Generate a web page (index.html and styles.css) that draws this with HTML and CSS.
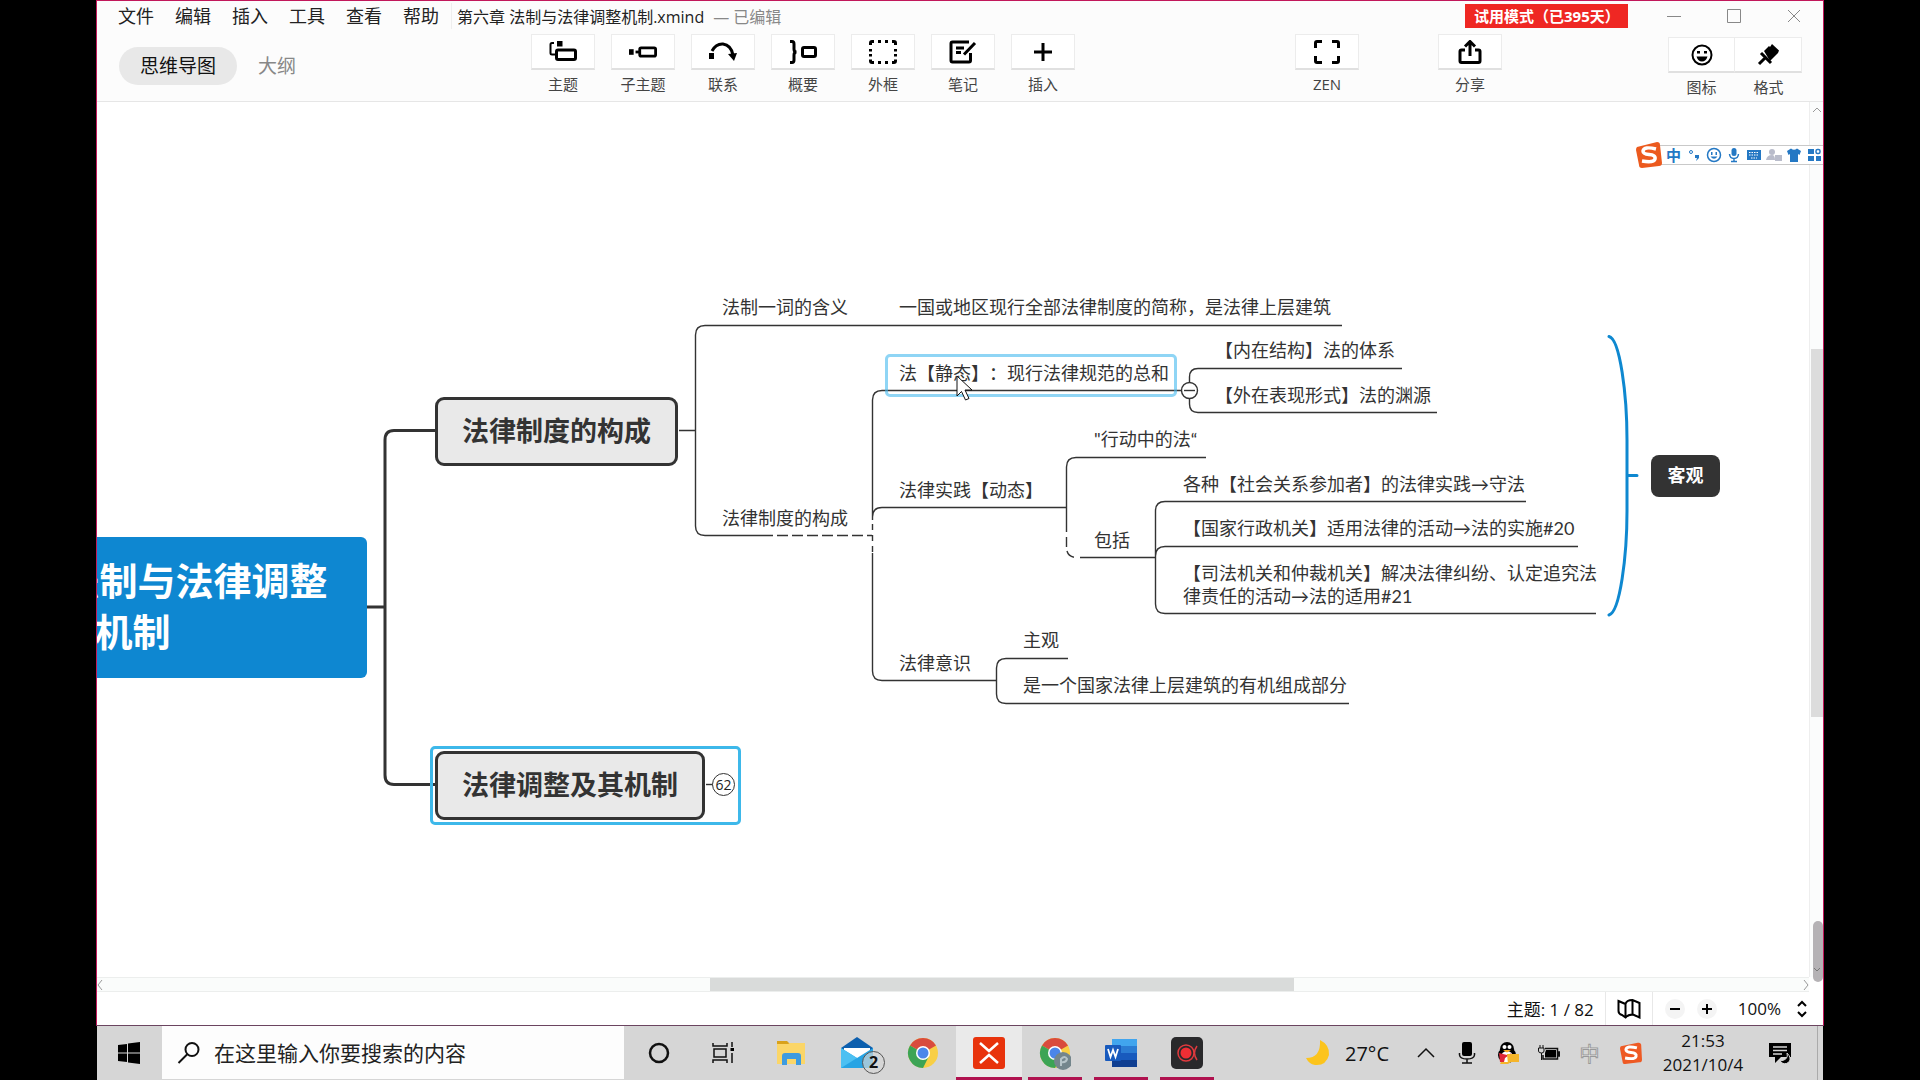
FILE: index.html
```html
<!DOCTYPE html>
<html lang="zh-CN">
<head>
<meta charset="utf-8">
<title>第六章 法制与法律调整机制.xmind</title>
<link rel="stylesheet" href="styles.css">
</head>
<body>
<div class="desktop">
  <div class="window">
    <header class="header">
      <div class="titlebar">
        <nav class="menu">
          <button>文件</button><button>编辑</button><button>插入</button><button>工具</button><button>查看</button><button>帮助</button>
        </nav>
        <div class="doc-title">第六章 法制与法律调整机制.xmind</div>
        <div class="doc-state">— 已编辑</div>
        <div class="trial">试用模式（已395天）</div>
        <div class="controls">
          <button aria-label="最小化"><svg width="14" height="14"><path d="M0 7.5H14"/></svg></button>
          <button aria-label="最大化"><svg width="14" height="14"><path d="M.5.5H13.5V13.500H.5Z"/></svg></button>
          <button aria-label="关闭"><svg width="14" height="14"><path d="M1 1L13 13M13 1L1 13"/></svg></button>
        </div>
      </div>
      <div class="toolbar">
        <div class="tabs">
          <button class="tab tab-on">思维导图</button>
          <button class="tab">大纲</button>
        </div>
        <div class="tools">
          <button class="tool"><span class="face"><svg class="ico" viewBox="0 0 28 24"><path d="M5 3H3Q1.500 3 1.500 4.500V13Q1.500 14.500 3 14.500H6" stroke-width="2"/><path d="M8 1H13.500V6.500H8Z" class="solid"/><rect x="7.500" y="10" width="19" height="9.500" rx="1.500"/></svg></span><span>主题</span></button>
          <button class="tool"><span class="face"><svg class="ico" viewBox="0 0 30 24"><path d="M0 9H5V15H0Z" class="solid"/><path d="M7 12H11"/><rect x="11.500" y="7.500" width="17" height="9" rx="1.500"/></svg></span><span>子主题</span></button>
          <button class="tool"><span class="face"><svg class="ico" viewBox="0 0 28 24"><path d="M0 13H5V19H0Z" class="solid"/><path d="M3 11Q7 3.500 14 4Q22 5 24 15"/><path d="M19 14L28 13L25 21Z" class="solid"/></svg></span><span>联系</span></button>
          <button class="tool"><span class="face"><svg class="ico" viewBox="0 0 28 24"><path d="M1 1.500H3Q5 1.500 5 4V9Q5 12 7.500 12Q5 12 5 15V20Q5 22.500 3 22.500H1"/><rect x="13.500" y="7.500" width="13" height="9" rx="1.500"/></svg></span><span>概要</span></button>
          <button class="tool"><span class="face"><svg class="ico" viewBox="0 0 28 24"><path d="M5 1.500H3Q1.500 1.500 1.500 3V5M9 1.500H12M16 1.500H19M23 1.500H25Q26.500 1.500 26.500 3V5M26.500 9V11.500M26.500 14V16.500M26.500 19.500V21Q26.500 22.500 25 22.500H23M19 22.500H16M12 22.500H9M5 22.500H3Q1.500 22.500 1.500 21V19.500M1.500 16.500V14M1.500 11.500V9"/></svg></span><span>外框</span></button>
          <button class="tool"><span class="face"><svg class="ico" viewBox="0 0 28 24"><path d="M20 2H3.500Q2 2 2 3.500V20.500Q2 22 3.500 22H20Q21.500 22 21.500 20.500V13M7 8H15M7 12.500H12M26 3L15 14.500"/></svg></span><span>笔记</span></button>
          <button class="tool"><span class="face"><svg class="ico" viewBox="0 0 28 24"><path d="M14 3V21M5 12H23"/></svg></span><span>插入</span></button>
        </div>
        <button class="tool tool-zen"><span class="face"><svg class="ico" viewBox="0 0 28 24"><path d="M9 1.500H4Q2.500 1.500 2.500 3V8M19 1.500H24Q25.500 1.500 25.500 3V8M25.500 16V21Q25.500 22.500 24 22.500H19M9 22.500H4Q2.500 22.500 2.500 21V16"/></svg></span><span>ZEN</span></button>
        <button class="tool tool-share"><span class="face"><svg class="ico" viewBox="0 0 28 24"><path d="M9 10H5.500Q4 10 4 11.500V21Q4 22.500 5.500 22.500H22.500Q24 22.500 24 21V11.500Q24 10 22.500 10H19M14 16V2M9 6.500L14 1.500L19 6.500"/></svg></span><span>分享</span></button>
        <div class="pair">
          <button class="tool"><span class="face"><svg class="ico" viewBox="0 0 28 24"><circle cx="14" cy="12" r="9.500"/><path d="M9 8H12V10.500H9ZM16 8H19V10.500H16ZM8.500 13.500H19.500Q18 18.500 14 18.500Q10 18.500 8.500 13.500Z" class="solid"/></svg></span><span>图标</span></button>
          <button class="tool"><span class="face"><svg class="ico" viewBox="0 0 28 24"><path d="M10 8L15 3L16 4L18 1L25 7.500L24 10L16 18Z" class="solid"/><path d="M7 10L17 20M12 14L5 21" stroke-width="3"/></svg></span><span>格式</span></button>
        </div>
      </div>
    </header>

    <main class="workspace">
      <div class="canvas">
        <svg class="links" viewBox="97 102 1712 875" width="1712" height="875">
          <g class="thick">
            <path d="M367 607H385M435 430.500H394Q385 430.500 385 440V775Q385 784.500 394 784.500H435"/>
          </g>
          <g class="thin">
            <path d="M679 430.500H695.500M1342 325.500H705Q695.500 325.500 695.500 335V526Q695.500 535.500 705 535.500H762"/>
            <path d="M762 535.500H872" stroke-dasharray="11 4"/>
            <path d="M1189 390.500H882Q872.500 390.500 872.500 400V520M1067 507.500H882Q872.500 507.500 872.500 517M872.500 553V671Q872.500 680.500 882 680.500H997"/>
            <path d="M872.500 524V553" stroke-dasharray="6 5"/>
            <path d="M1402 368.500H1198Q1189.500 368.500 1189.500 377V404Q1189.500 412.500 1198 412.500H1437"/>
            <path d="M1206 457.500H1076Q1066.500 457.500 1066.500 467V532M1080 557.500H1156"/>
            <path d="M1066.500 537V548Q1067 557 1076 557.500" stroke-dasharray="10 4"/>
            <path d="M1526 501.500H1165Q1155.500 501.500 1155.500 511V604Q1155.500 613.500 1165 613.500H1596M1155.500 556Q1155.500 546.500 1165 546.500H1578"/>
            <path d="M1068 658.500H1006Q996.500 658.500 996.500 668V694Q996.500 703.500 1006 703.500H1349"/>
            <circle cx="1189.500" cy="390.500" r="8"/><path d="M1184 390.500H1195"/>
            <path d="M706 784.500H713"/>
          </g>
          <path class="brace" d="M1609 336.500C1620 339 1627 395 1627 440V511C1627 556 1620 612 1609 615M1627 475.500H1637"/>
        </svg>

        <div class="central">第六章 法制与法律调整<br>机制</div>
        <div class="main main-a">法律制度的构成</div>
        <div class="main main-b">法律调整及其机制</div>
        <div class="picked"></div>
        <div class="count">62</div>

        <div class="leaf leaf-term">法制一词的含义</div>
        <div class="leaf leaf-def">一国或地区现行全部法律制度的简称，是法律上层建筑</div>
        <div class="leaf leaf-parts">法律制度的构成</div>
        <div class="leaf leaf-static">法【静态】：现行法律规范的总和</div>
        <div class="leaf leaf-inner">【内在结构】法的体系</div>
        <div class="leaf leaf-outer">【外在表现形式】法的渊源</div>
        <div class="leaf leaf-dynamic">法律实践【动态】</div>
        <div class="leaf leaf-action">"行动中的法“</div>
        <div class="leaf leaf-include">包括</div>
        <div class="leaf leaf-social">各种【社会关系参加者】的法律实践→守法</div>
        <div class="leaf leaf-admin">【国家行政机关】适用法律的活动→法的实施#20</div>
        <div class="leaf leaf-court">【司法机关和仲裁机关】解决法律纠纷、认定追究法<br>律责任的活动→法的适用#21</div>
        <div class="leaf leaf-mind">法律意识</div>
        <div class="leaf leaf-subj">主观</div>
        <div class="leaf leaf-organic">是一个国家法律上层建筑的有机组成部分</div>
        <div class="hovered"></div>
        <div class="summary">客观</div>
        <svg class="cursor" viewBox="0 0 18 26"><path d="M1 1V21L5.500 16.500L9.500 25L13 23.500L9 15H16Z"/></svg>
      </div>
      <div class="vscroll"><svg width="10" height="6"><path d="M1 5L5 1L9 5"/></svg><i class="vthumb"></i></div>
      <div class="hscroll"><svg width="6" height="12"><path d="M5 1L1 6L5 11"/></svg><i class="hthumb"></i><svg width="6" height="12"><path d="M1 1L5 6L1 11"/></svg></div>
      <div class="corner"><svg width="8" height="6"><path d="M1 1L4 4L7 1"/></svg></div>

      <div class="ime">
        <svg class="sogou" viewBox="0 0 26 26"><path d="M1 5L21 0Q24 0 24 3L26 21Q26 24 23 24L6 26Q3 26 3 23L0 8Q0 6 1 5Z" fill="#ec5a1e"/><path d="M20 7Q8 4 7 9Q7 12 13 12.500Q20 13 19 17Q18 21 6 19" fill="none" stroke="#fff" stroke-width="3.500"/></svg>
        <b>中</b>
        <svg viewBox="0 0 16 16"><circle cx="5" cy="5" r="1.500" fill="none" stroke="#2478c4"/><path d="M9 8H13V11L10 14L11 11H9Z"/></svg>
        <svg viewBox="0 0 16 16"><circle cx="8" cy="8" r="6.500" fill="none" stroke="#2478c4" stroke-width="1.500"/><path d="M5 5H6.500V8H5ZM9.500 5H11V8H9.500ZM4.500 9.500H11.500Q8 14 4.500 9.500Z"/></svg>
        <svg viewBox="0 0 16 16"><rect x="5.500" y="1" width="5" height="8" rx="2.500"/><path d="M3.500 7Q4 11.500 8 11.500T12.500 7M8 11V15M5 14.500H11" fill="none" stroke="#2478c4" stroke-width="1.500"/></svg>
        <svg viewBox="0 0 16 16"><path d="M1 3H15V13H1Z"/><path d="M3 5.500H13M3 8H13M5 11H11" stroke="#fff" stroke-dasharray="1.500 1" fill="none"/></svg>
        <svg class="dim" viewBox="0 0 16 16"><circle cx="6" cy="5" r="3"/><path d="M0 13Q1 8 6 8Q9 8 9 13ZM9 8H16V14H9Z"/></svg>
        <svg viewBox="0 0 16 16"><path d="M1 4L5 1.500Q8 4 11 1.500L15 4L13.500 8L12 7V15H4V7L2.500 8Z"/></svg>
        <svg viewBox="0 0 16 16"><path d="M2 2H8V7H2ZM2 9H8V14H2ZM10 9H15V14H10Z"/><rect x="10" y="2.500" width="4" height="4" rx="1.500" fill="none" stroke="#2478c4" stroke-width="1.500"/></svg>
      </div>
    </main>

    <footer class="status">
      <span class="topics">主题: 1 / 82</span>
      <button class="mapbtn" aria-label="导航图"><svg width="24" height="20" viewBox="0 0 24 20"><path d="M1.500 2L8.500 5Q9.500 1 15.500 1L22.500 4V18.500L16 15.500Q11 15.500 8.500 18.500L5 16Q1.500 15 1.500 12ZM8.500 5V18.500M15.500 1V15.500"/></svg></button>
      <button class="round" aria-label="缩小"><svg width="12" height="12"><path d="M1 6H11"/></svg></button>
      <button class="round" aria-label="放大"><svg width="12" height="12"><path d="M1 6H11M6 1V11"/></svg></button>
      <span class="zoom">100%</span>
      <button class="step" aria-label="缩放比例"><svg width="12" height="18"><path d="M2 6L6 2L10 6M2 12L6 16L10 12"/></svg></button>
    </footer>
  </div>

  <div class="taskbar">
    <button class="start" aria-label="开始"><svg width="22" height="22" viewBox="0 0 22 22"><path d="M0 3L9 2V10.500H0ZM10 1.500L22 0V10.500H10ZM0 11.500H9V20L0 19ZM10 11.500H22V22L10 20.500Z"/></svg></button>
    <label class="search"><svg width="24" height="24" viewBox="0 0 24 24"><circle cx="15" cy="8.500" r="6.500"/><path d="M10.500 13L1.500 22"/></svg><input type="text" placeholder="在这里输入你要搜索的内容" aria-label="搜索"></label>
    <div class="apps">
      <button aria-label="Cortana"><svg viewBox="0 0 32 34"><circle cx="16" cy="17" r="9" fill="none" stroke="#111" stroke-width="2.500"/></svg></button>
      <button aria-label="任务视图"><svg viewBox="0 0 32 34"><path d="M4 7V10H18V7M4 27V24H18V27M5 13H17V21H5ZM23 6V11M23 17V27" fill="none" stroke="#111" stroke-width="1.500"/><path d="M21.500 12H25V15H21.500Z"/></svg></button>
      <button aria-label="文件资源管理器"><svg viewBox="0 0 32 34"><path d="M2 5H12L15 8V12H2Z" fill="#d9a21b"/><path d="M2 8H13L15 7H30V28H2Z" fill="#fbd668"/><path d="M7 29V20Q7 17 10 17H23Q26 17 26 20V29H21V23H12V29Z" fill="#3e9be0"/></svg></button>
      <button aria-label="邮件"><svg viewBox="0 0 32 34"><path d="M0 12L16 1L32 12V32H0Z" fill="#0c5fae"/><path d="M3 12H29V22H3Z" fill="#fff"/><path d="M0 12L16 22L32 12V32H0Z" fill="#27a4e4"/><path d="M0 32L16 22L0 12Z" fill="#4cc0f2"/></svg><span class="badge">2</span></button>
      <button aria-label="Chrome"><svg viewBox="0 0 32 34"><g id="chrome"><circle cx="16" cy="17" r="15" fill="#f8cf45"/><path d="M16 17L3 9.500A15 15 0 0 1 29 9.500Z" fill="#d94b3d"/><path d="M16 17L3 9.500A15 15 0 0 0 16 32L22 20Z" fill="#3ca455"/><circle cx="16" cy="17" r="7" fill="#fff"/><circle cx="16" cy="17" r="5.500" fill="#4b86ea"/></g></svg></button>
      <button class="on active" aria-label="XMind"><svg viewBox="0 0 32 34"><rect y="1" width="32" height="32" rx="3" fill="#e8330c"/><path d="M7 7L16 15L25 7M7 27L16 19L25 27" fill="none" stroke="#fff" stroke-width="2.500"/></svg></button>
      <button class="on" aria-label="Chrome 用户"><svg viewBox="0 0 32 34"><use href="#chrome"/><circle cx="24" cy="25" r="9" fill="#74868c"/><path d="M22 30V23Q26 19 28 23Q27 27 22 26" fill="none" stroke="#b6c4c8" stroke-width="2"/></svg></button>
      <button class="on" aria-label="Word"><svg viewBox="0 0 32 34"><path d="M7 3H32V10H7Z" fill="#41a5ee"/><path d="M7 10H32V17H7Z" fill="#2b7cd3"/><path d="M7 17H32V24H7Z" fill="#185abd"/><path d="M7 24H32V31H7Z" fill="#103f91"/><rect y="9" width="16" height="16" rx="1" fill="#185abd"/><path d="M3 13L5.500 21L8 14L10.500 21L13 13" fill="none" stroke="#fff" stroke-width="1.800"/></svg></button>
      <button class="on" aria-label="录屏"><svg viewBox="0 0 32 34"><rect y="1" width="32" height="32" rx="5" fill="#29292b"/><circle cx="15" cy="17" r="5.500" fill="#f02e34"/><circle cx="15" cy="17" r="8" fill="none" stroke="#e03a3e" stroke-width="1.500"/><path d="M26 10Q21 17 26 24" fill="none" stroke="#e03a3e" stroke-width="1.500"/></svg></button>
    </div>
    <div class="tray">
      <button class="weather"><svg width="26" height="26" viewBox="0 0 26 26"><path d="M15 0Q25 5 24 15Q21 26 10 25Q4 24 1 18Q16 18 15 0Z" fill="#fcc41c"/></svg><span>27°C</span></button>
      <button aria-label="显示隐藏的图标"><svg viewBox="0 0 22 22"><path d="M3 15L11 7L19 15" fill="none" stroke="#111" stroke-width="1.500"/></svg></button>
      <button aria-label="麦克风"><svg viewBox="0 0 22 22"><rect x="6" y="0" width="10" height="14" rx="2"/><path d="M3.500 11V13Q4 17 11 17T18.500 13V11M11 17V21M6 21H16" fill="none" stroke="#111" stroke-width="1.500"/></svg></button>
      <button aria-label="QQ"><svg viewBox="0 0 22 22"><ellipse cx="10" cy="13" rx="9" ry="8"/><ellipse cx="10" cy="7" rx="7" ry="7"/><ellipse cx="10" cy="15" rx="6" ry="6" fill="#fff"/><circle cx="7.500" cy="5" r="2" fill="#fff"/><circle cx="12.500" cy="5" r="2" fill="#fff"/><path d="M6 8H14L10 10.500Z" fill="#f5a81c"/><path d="M2 11L10 13L15 11L8 16L7 20H3Z" fill="#df2638"/><path d="M10 12H22V20H14L11 22Z" fill="#f5b52b"/><path d="M4 20H11V22H3Z" fill="#f5b52b"/></svg></button>
      <button aria-label="电源"><svg viewBox="0 0 22 22"><path d="M7 6.500H19.500V17H5V13M20 10H21.500V14H20Z" fill="none" stroke="#111" stroke-width="1.500"/><path d="M8 8H18V15.500H7V11Z"/><path d="M.5 6H6V9Q6 11 3.500 11Q.5 11 .5 9ZM2 6V3M5 6V3M3.500 11V18" fill="none" stroke="#111"/></svg></button>
      <button class="lang">中</button>
      <button aria-label="搜狗输入法"><svg viewBox="0 0 26 26"><path d="M1 5L21 1Q24 0 25 3L26 21Q26 24 23 24L6 26Q3 26 3 23L0 8Q0 6 1 5Z" fill="#ee5a24"/><path d="M20 7Q8 4 7 9Q7 12 13 12.500Q20 13 19 17Q18 21 6 19" fill="none" stroke="#fff" stroke-width="3.500"/></svg></button>
      <div class="clock"><span>21:53</span><span>2021/10/4</span></div>
      <button class="notice" aria-label="通知"><svg viewBox="0 0 22 22"><path d="M0 1H22V15H12L6 21V15H0Z"/><path d="M4 5H18M4 8.500H18M4 12H13" stroke="#d6d6d6" stroke-width="1.500"/><path d="M18 11Q20 18 11 19Q15 24 20 20Q23 16 18 11Z" stroke="#d6d6d6"/></svg></button>
      <i class="peek"></i>
    </div>
  </div>
</div>
</body>
</html>
```
FILE: styles.css
```css
* { box-sizing: border-box; }
body {
  margin: 0;
  background: #000;
  color: #222;
  font-family: "Open Sans", "Noto Sans CJK SC", sans-serif;
  font-size: 16px;
}
button {
  margin: 0;
  padding: 0;
  border: 0;
  background: none;
  color: inherit;
  font: inherit;
}
svg { display: block; flex: none; }

.desktop {
  display: flex;
  flex-direction: column;
  min-height: 100vh;
  margin: 0 5vw;
}
.window {
  flex: 1;
  display: flex;
  flex-direction: column;
  border: 1px solid #c2185b;
  border-bottom-color: #6b4560;
  background: #fff;
}

/* Header */
.header {
  height: 101px;
  background: #fcfcfc;
  border-bottom: 1px solid #e6e6e6;
}
.titlebar { display: flex; align-items: center; height: 30px; }
.menu {
  display: flex;
  gap: 21px;
  padding: 0 12px 0 21px;
  border-right: 1px solid #eee;
  font-size: 18px;
  line-height: 26px;
}
.doc-title { margin-left: 5px; }
.doc-state { margin-left: 9px; color: #888; }
.trial {
  margin-left: auto;
  width: 163px;
  padding-left: 9px;
  background: #ef2723;
  color: #fff;
  font-size: 15px;
  font-weight: 700;
  line-height: 24px;
  white-space: nowrap;
  text-spacing-trim: space-all;
}
.controls { display: flex; gap: 46px; margin: 0 22px 0 39px; }
.controls svg { fill: none; stroke: #888; }

.toolbar { display: flex; align-items: flex-start; padding: 3px 21px 0 22px; }
.tabs { display: flex; padding-top: 13px; font-size: 19px; line-height: 38px; }
.tab { padding: 0 21px; color: #888; white-space: nowrap; }
.tab-on { border-radius: 19px; background: #e8e8e8; color: #111; }
.tools { display: flex; gap: 16px; margin-left: 214px; }
.tool {
  display: flex;
  flex-direction: column;
  align-items: center;
  gap: 4px;
  width: 64px;
  font-size: 15px;
  line-height: 20px;
  color: #444;
}
.face {
  display: flex;
  align-items: center;
  justify-content: center;
  align-self: stretch;
  height: 36px;
  border: 1px solid #ececec;
  border-bottom: 2px solid #e0e0e0;
  background: #fff;
}
.ico { width: 28px; height: 24px; fill: none; stroke: #000; stroke-width: 3; }
.ico .solid { fill: #000; stroke: none; }
.tool-zen { margin-left: auto; }
.tool-share { margin-left: 79px; }
.pair { display: flex; margin-left: 166px; padding-top: 3px; }
.pair .tool { width: 67px; }
.pair .tool + .tool .face { border-left: 0; }
.pair .ico { stroke-width: 2; }

/* Workspace */
.workspace {
  position: relative;
  flex: 1;
  display: grid;
  grid-template-columns: 1fr 14px;
  grid-template-rows: minmax(760px, 1fr) 15px;
}
.canvas { position: relative; overflow: hidden; }
.links { position: absolute; left: 0; top: 0; fill: none; }
.thick { stroke: #333; stroke-width: 3; }
.thin { stroke: #333; stroke-width: 1.4; }
.thin circle { fill: #fff; }
.brace { stroke: #0e88d0; stroke-width: 3; stroke-linecap: round; }

.central {
  position: absolute;
  left: -199px;
  top: 435px;
  width: 469px;
  height: 141px;
  padding-top: 18px;
  border-radius: 6px;
  background: #0e87d1;
  color: #fff;
  font-size: 38px;
  font-weight: 700;
  line-height: 51px;
  text-align: center;
}
.main {
  position: absolute;
  left: 338px;
  height: 69px;
  padding: 0 24px;
  border: 3px solid #333;
  border-radius: 9px;
  background: #e9e9e9;
  color: #333;
  font-size: 27px;
  font-weight: 700;
  line-height: 62px;
  white-space: nowrap;
}
.main-a { top: 295px; }
.main-b { top: 649px; }
.picked, .hovered { position: absolute; border: 3px solid #3db8ea; border-radius: 5px; }
.picked { left: 333px; top: 644px; width: 311px; height: 79px; }
.hovered { left: 788px; top: 252px; width: 292px; height: 43px; border-color: #45b9ee99; }
.count {
  position: absolute;
  left: 615px;
  top: 671px;
  width: 23px;
  height: 23px;
  border: 1px solid #333;
  border-radius: 50%;
  background: #fff;
  font-size: 14px;
  line-height: 21px;
  text-align: center;
}
.leaf {
  position: absolute;
  color: #333;
  font-family: Lato, "Noto Sans CJK SC", sans-serif;
  font-size: 18px;
  line-height: 23px;
  white-space: nowrap;
  text-spacing-trim: space-all;
}
.leaf-term { left: 625px; top: 194px; }
.leaf-def { left: 802px; top: 194px; }
.leaf-parts { left: 625px; top: 405px; }
.leaf-static { left: 802px; top: 260px; }
.leaf-inner { left: 1118px; top: 237px; }
.leaf-outer { left: 1118px; top: 282px; }
.leaf-dynamic { left: 802px; top: 377px; }
.leaf-action { left: 997px; top: 326px; }
.leaf-include { left: 997px; top: 427px; }
.leaf-social { left: 1086px; top: 371px; }
.leaf-admin { left: 1086px; top: 415px; }
.leaf-court { left: 1086px; top: 460px; }
.leaf-mind { left: 802px; top: 550px; }
.leaf-subj { left: 926px; top: 527px; }
.leaf-organic { left: 926px; top: 572px; }
.summary {
  position: absolute;
  left: 1554px;
  top: 353px;
  width: 69px;
  height: 42px;
  border-radius: 8px;
  background: #333;
  color: #fff;
  font-size: 18px;
  font-weight: 700;
  line-height: 40px;
  text-align: center;
}
.cursor {
  position: absolute;
  left: 859px;
  top: 273px;
  width: 18px;
  height: 26px;
  fill: #fff;
  stroke: #111;
}

.vscroll {
  display: flex;
  flex-direction: column;
  align-items: center;
  padding-top: 5px;
  border-left: 1px solid #eee;
  background: #fbfcfc;
}
.vthumb { width: 12px; height: 368px; margin-top: 236px; background: #dcdcdc; }
.hscroll {
  display: flex;
  align-items: center;
  border: solid #eceeed;
  border-width: 1px 0;
  background: #fafcfb;
}
.hthumb { width: 584px; height: 13px; margin: 0 auto 0 607px; background: #d9dbda; }
.vscroll svg, .hscroll svg { fill: none; stroke: #999; }
.corner {
  position: absolute;
  right: 0;
  bottom: 10px;
  display: flex;
  align-items: flex-end;
  width: 10px;
  height: 61px;
  padding-bottom: 9px;
  border-radius: 5px;
  background: #b5b2b5;
}
.corner svg { fill: none; stroke: #777; }

.ime {
  position: absolute;
  right: 0;
  top: 43px;
  display: flex;
  align-items: center;
  gap: 4px;
  width: 164px;
  height: 20px;
  border: 1px solid #c9c9c9;
  border-right: 0;
  background: #fff;
  color: #2478c4;
  font-size: 15px;
  line-height: 18px;
}
.ime svg { width: 16px; height: 16px; fill: #2478c4; }
.ime b { margin-right: 1px; }
.ime .sogou { width: 26px; height: 26px; margin-left: -24px; }
.ime .dim { fill: #b9bccb; }

/* Status bar */
.status {
  display: flex;
  justify-content: flex-end;
  align-items: center;
  height: 33px;
  padding-right: 15px;
  color: #111;
  font-size: 17px;
}
.status svg { fill: none; stroke: #000; stroke-width: 2; }
.mapbtn {
  height: 33px;
  margin: 0 12px 0 11px;
  padding: 0 11px;
  border: solid #e8e8e8;
  border-width: 0 1px;
}
.round { padding: 4px; border-radius: 50%; background: #f4f4f4; }
.round + .round { margin-left: 12px; }
.zoom { margin-left: 21px; }
.step { margin-left: 15px; }

/* Taskbar */
.taskbar {
  display: flex;
  height: 54px;
  margin: 0 1px;
  background: #d6d6d6;
  color: #111;
}
.start { display: flex; align-items: center; justify-content: center; width: 65px; padding-right: 2px; }
.search {
  display: flex;
  align-items: center;
  gap: 13px;
  width: 462px;
  margin-bottom: 1px;
  padding-left: 15px;
  background: #fdfdfd;
}
.search svg { fill: none; stroke: #111; stroke-width: 2; }
.search input {
  flex: 1;
  min-width: 0;
  padding: 0;
  border: 0;
  outline: 0;
  background: none;
  font: inherit;
  font-size: 21px;
}
.search input::placeholder { color: #222; opacity: 1; }
.apps { display: flex; margin-left: 2px; }
.apps button {
  position: relative;
  display: flex;
  align-items: center;
  justify-content: center;
  width: 66px;
}
.apps svg { width: 32px; height: 34px; }
.apps .on::after {
  content: "";
  position: absolute;
  left: 6px;
  right: 6px;
  bottom: 0;
  height: 3px;
  background: #b0124f;
}
.apps .active { background: #eaeaea; }
.apps .active::after { left: 0; right: 0; }
.badge {
  position: absolute;
  left: 38px;
  top: 25px;
  width: 23px;
  height: 23px;
  border: 1px solid #555;
  border-radius: 50%;
  background: #d6d6d6aa;
  font-size: 16px;
  font-weight: 700;
  line-height: 21px;
}
.tray { display: flex; margin-left: auto; }
.tray button { display: flex; align-items: center; justify-content: center; width: 41px; }
.tray svg { width: 22px; height: 22px; }
.tray .weather { gap: 14px; width: auto; margin-right: 16px; font-size: 20px; }
.tray .weather svg { width: 26px; height: 26px; }
.tray .lang { color: #fff; font-size: 20px; -webkit-text-stroke: 1px #999; }
.clock {
  display: flex;
  flex-direction: column;
  align-items: center;
  justify-content: center;
  width: 104px;
  font-size: 17px;
  line-height: 24px;
}
.tray .notice { width: 50px; }
.peek { width: 6px; margin-left: 12px; border-left: 1px solid #aaa; }
```
